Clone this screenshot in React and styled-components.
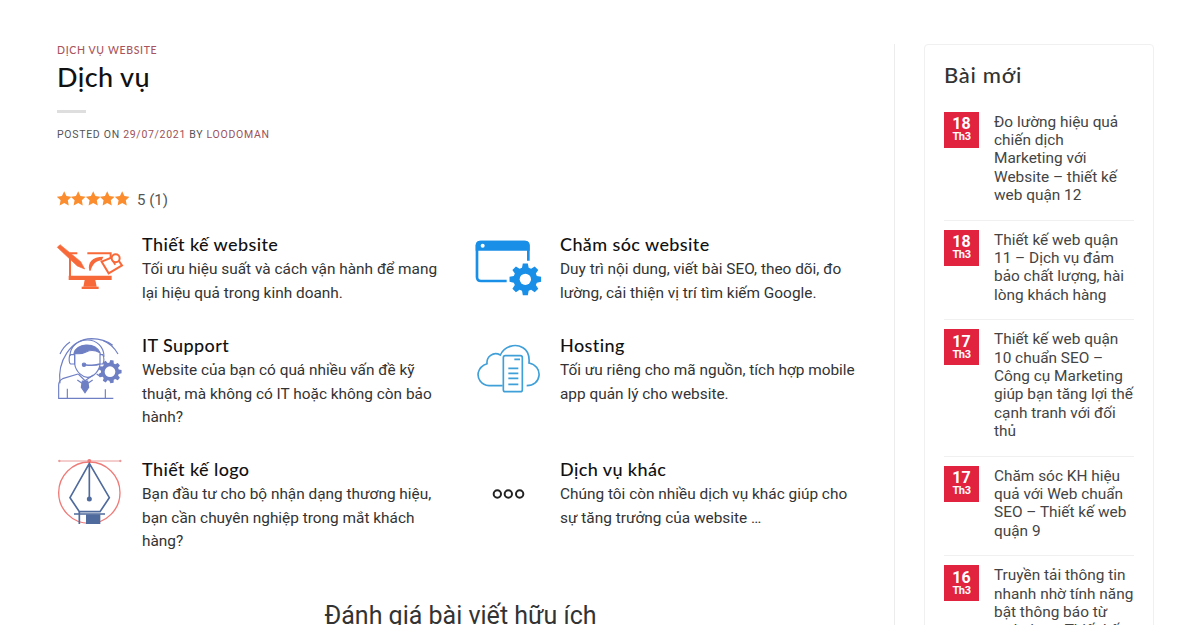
import React from 'react';
import styled, { createGlobalStyle } from 'styled-components';

const GlobalStyle = createGlobalStyle`
  html, body {
    margin: 0;
    height: 625px;
    overflow: hidden;
    background: #fff;
    font-family: Roboto, "Liberation Sans", sans-serif;
  }
`;

const heading = 'Lato, "Noto Sans", sans-serif';

const Page = styled.div`
  display: flex;
  width: 1200px;
  height: 625px;
  overflow: hidden;
  padding: 44px 47px 0 57px;
  box-sizing: border-box;
`;

const Main = styled.main`
  width: 838px;
  flex: none;
  padding-right: 30px;
  box-sizing: border-box;
  border-right: 1px solid #ececec;
  height: 700px;
`;

const Category = styled.div`
  font-family: ${heading};
  font-size: 10.5px;
  line-height: 12px;
  letter-spacing: 0.65px;
  font-weight: 500;
  color: #a9545c;
`;

const Title = styled.h1`
  margin: 5px 0 0;
  font-family: ${heading};
  font-size: 27px;
  line-height: 32px;
  letter-spacing: 0.4px;
  font-weight: 500;
  color: #111;
`;

const Rule = styled.div`
  width: 29px;
  height: 3px;
  margin-top: 17px;
  background: #dedede;
`;

const Meta = styled.div`
  margin-top: 15px;
  font-size: 10.5px;
  line-height: 13px;
  letter-spacing: 0.7px;
  text-transform: uppercase;
  color: #555;
`;

const MetaLink = styled.span`
  color: #9c5158;
`;

const Rating = styled.div`
  display: flex;
  align-items: center;
  gap: 8px;
  margin-top: 49px;
  font-size: 15px;
  line-height: 20px;
  color: #555;
`;

const Stars = styled.div`
  display: flex;
  width: 72px;
  margin-top: -3px;
`;

const Services = styled.div`
  display: grid;
  grid-template-columns: 418px 400px;
  margin-top: 24px;
`;

const Service = styled.div`
  display: flex;
  min-height: ${(p) => p.$height}px;
`;

const IconCell = styled.div`
  width: 85px;
  flex: none;
  padding-top: 4px;
`;

const IconSvg = styled.svg`
  display: block;
  width: 85px;
  height: 80px;
  overflow: visible;
`;

const ServiceTitle = styled.h3`
  margin: -1px 0 0;
  font-family: ${heading};
  font-size: 18px;
  line-height: 22px;
  letter-spacing: 0.4px;
  font-weight: 500;
  color: #111;
`;

const ServiceText = styled.p`
  margin: 3px 0 0;
  width: 303px;
  font-size: 15.4px;
  line-height: 23.5px;
  color: #333;
`;

const Review = styled.h2`
  margin: 40px 0 0;
  text-align: center;
  font-size: 25px;
  line-height: 32px;
  font-weight: 400;
  color: #333;
`;

const Side = styled.aside`
  margin-left: 29px;
  width: 230px;
  height: 700px;
  flex: none;
  box-sizing: border-box;
  padding: 17px 19px 0 19px;
  border: 1px solid #f0f0f0;
  border-radius: 4px;
`;

const SideTitle = styled.h3`
  margin: 0 0 14.5px;
  font-family: ${heading};
  font-size: 22px;
  line-height: 26px;
  letter-spacing: 0.7px;
  font-weight: 500;
  color: #333;
`;

const Post = styled.div`
  display: flex;
  gap: 15px;
  padding: 10px 0 15px;
  border-bottom: 1px solid #f0f0f0;
`;

const DateBadge = styled.div`
  width: 35px;
  height: 36px;
  flex: none;
  display: flex;
  flex-direction: column;
  align-items: center;
  justify-content: center;
  background: #e2233f;
  color: #fff;
  font-weight: 700;
  margin-top: -1px;
`;

const Day = styled.span`
  font-size: 16px;
  line-height: 14px;
`;

const Month = styled.span`
  font-size: 11px;
  line-height: 11px;
  letter-spacing: -0.4px;
`;

const PostTitle = styled.div`
  font-size: 15.4px;
  line-height: 18.4px;
  color: #444;
`;

const Star = () => (
  <svg width="14.4" height="15" viewBox="1 1 22 22" fill="#fb8d2e">
    <path d="M12 1l3.4 7.3 7.9 1-5.8 5.5 1.5 7.9L12 18.8l-7 3.9 1.5-7.9L.7 9.3l7.9-1z" />
  </svg>
);

// toothed outline for the two gear icons
const gearPath = (cx, cy, outer, inner, teeth) => {
  const pts = [];
  const step = (Math.PI * 2) / teeth;
  for (let i = 0; i < teeth; i++) {
    const a = i * step;
    const at = (r, d) => `${(cx + r * Math.cos(a + d)).toFixed(1)} ${(cy + r * Math.sin(a + d)).toFixed(1)}`;
    pts.push(at(inner, -step * 0.36), at(outer, -step * 0.2), at(outer, step * 0.2), at(inner, step * 0.36));
  }
  return `M${pts.join('L')}Z`;
};

const DesignIcon = () => (
  <IconSvg viewBox="21 24 255 240" fill="none" stroke="#f8693a">
    <path d="M22 52L30 44L92 95L104 117L82 108Z" fill="#f8693a" strokeWidth="2" />
    <path d="M60 70H82M112 70H182V84M60 72V140" strokeWidth="6" />
    <path d="M56 137H185V150H56Z" fill="#f8693a" stroke="none" />
    <path d="M104 150H136L140 170H100Z" fill="#f8693a" stroke="none" />
    <path d="M95 170H146V177H95Z" fill="#f8693a" stroke="none" />
    <path d="M118 122C112 98 126 80 160 80L155 92C142 90 128 100 122 122Z" fill="#f8693a" stroke="none" />
    <path d="M155 95L196 78L216 106L176 130Z" fill="#fff" strokeWidth="6" />
    <circle cx="197" cy="85" r="12" fill="#fff" strokeWidth="6" />
    <path d="M188 92L196 104" strokeWidth="5" />
  </IconSvg>
);

const SupportIcon = () => (
  <IconSvg viewBox="21 27 255 240" fill="none" stroke="#6f7fc4" strokeWidth="3.5">
    <path d="M30 160C22 95 60 28 125 26C150 26 170 32 188 46" />
    <path d="M30 72C38 55 48 44 60 36M160 32C180 40 195 55 204 72" />
    <path d="M60 78C60 48 85 30 112 30C140 30 162 50 162 80" />
    <path d="M72 70C78 40 135 35 150 68C135 60 120 60 108 66C96 72 82 72 72 70Z" fill="#6f7fc4" />
    <path d="M74 70V102C78 128 100 142 112 142C130 142 150 122 150 100V70" />
    <path d="M62 74H74V102H62C56 100 56 76 62 74ZM150 74H158C163 80 163 98 158 102H150" />
    <path d="M150 102C140 106 118 106 102 104" strokeWidth="4.5" />
    <circle cx="102" cy="104" r="5" fill="#6f7fc4" />
    <path d="M84 132L38 146C30 150 26 156 26 165V205H190" />
    <path d="M140 132L152 140" />
    <path d="M85 132L105 152L130 135M82 150L96 160M128 150L114 160" />
    <path d="M97 153H113L116 172L105 188L94 172Z" fill="#6f7fc4" />
    <path d="M52 176V205M166 178V205" />
    <path d={gearPath(180, 125, 35, 27, 9)} fill="#6f7fc4" stroke="none" />
    <circle cx="180" cy="125" r="16" fill="#fff" stroke="none" />
  </IconSvg>
);

const PenIcon = () => (
  <IconSvg viewBox="21 24 255 240" fill="none">
    <circle cx="118" cy="113" r="92" stroke="#ee7b78" strokeWidth="4" />
    <path d="M26 18H212" stroke="#e99a9a" strokeWidth="3" />
    <circle cx="118" cy="18" r="6" fill="#ee7b78" />
    <circle cx="28" cy="18" r="3.5" fill="#e99a9a" />
    <circle cx="211" cy="18" r="3.5" fill="#e99a9a" />
    <path d="M118 25L60 128L88 170H150L178 128ZM118 25V130" stroke="#4f6a9c" strokeWidth="5" />
    <circle cx="118" cy="132" r="7.5" fill="#4f6a9c" />
    <path d="M72 177H165M88 170V207" stroke="#4f6a9c" strokeWidth="5" />
    <path d="M108 178H151V207H108Z" fill="#4f6a9c" />
  </IconSvg>
);

const CareIcon = () => (
  <IconSvg viewBox="30 24 255 240" fill="none">
    <path d="M125 153H48C40 153 36 149 36 141V48C36 40 40 36 48 36H178C186 36 190 40 190 48V92" stroke="#1a8fe8" strokeWidth="8" />
    <path d="M32 62V46C32 37 37 32 46 32H180C189 32 194 37 194 46V62Z" fill="#1a8fe8" />
    <circle cx="53" cy="47" r="6" fill="#fff" />
    <path d={gearPath(181, 148, 48, 36, 8)} fill="#1a8fe8" />
    <circle cx="181" cy="148" r="17" fill="#fff" />
  </IconSvg>
);

const CloudIcon = () => (
  <IconSvg viewBox="30 12 255 240" fill="none" stroke="#3f9fd8" strokeWidth="5">
    <path d="M113 152H72C48 150 36 130 40 112C44 96 54 90 66 86C64 66 84 48 106 60C118 34 150 24 174 38C188 46 194 62 192 84C212 88 224 104 222 122C220 140 206 152 185 152" />
    <rect x="115" y="62" width="57" height="108" rx="6" fill="#fff" />
    <path d="M130 100H160M130 115H160M130 130H160M130 148H160M148 73H165" />
  </IconSvg>
);

const DotsIcon = () => (
  <IconSvg viewBox="-15 -21 255 240" fill="none" stroke="#222" strokeWidth="6">
    <circle cx="52" cy="72" r="11" />
    <circle cx="85" cy="72" r="11" />
    <circle cx="119" cy="72" r="11" />
  </IconSvg>
);

const services = [
  { title: 'Thiết kế website', text: 'Tối ưu hiệu suất và cách vận hành để mang lại hiệu quả trong kinh doanh.', icon: <DesignIcon />, height: 101 },
  { title: 'Chăm sóc website', text: 'Duy trì nội dung, viết bài SEO, theo dõi, đo lường, cải thiện vị trí tìm kiếm Google.', icon: <CareIcon />, height: 101 },
  { title: 'IT Support', text: 'Website của bạn có quá nhiều vấn đề kỹ thuật, mà không có IT hoặc không còn bảo hành?', icon: <SupportIcon />, height: 124 },
  { title: 'Hosting', text: 'Tối ưu riêng cho mã nguồn, tích hợp mobile app quản lý cho website.', icon: <CloudIcon />, height: 124 },
  { title: 'Thiết kế logo', text: 'Bạn đầu tư cho bộ nhận dạng thương hiệu, bạn cần chuyên nghiệp trong mắt khách hàng?', icon: <PenIcon />, height: 101 },
  { title: 'Dịch vụ khác', text: 'Chúng tôi còn nhiều dịch vụ khác giúp cho sự tăng trưởng của website …', icon: <DotsIcon />, height: 101 },
];

const posts = [
  { day: 18, title: 'Đo lường hiệu quả chiến dịch Marketing với Website – thiết kế web quận 12' },
  { day: 18, title: 'Thiết kế web quận 11 – Dịch vụ đảm bảo chất lượng, hài lòng khách hàng' },
  { day: 17, title: 'Thiết kế web quận 10 chuẩn SEO – Công cụ Marketing giúp bạn tăng lợi thế cạnh tranh với đối thủ' },
  { day: 17, title: 'Chăm sóc KH hiệu quả với Web chuẩn SEO – Thiết kế web quận 9' },
  { day: 16, title: 'Truyền tải thông tin nhanh nhờ tính năng bật thông báo từ website – Thiết kế web' },
];

export default function App() {
  return (
    <Page>
      <GlobalStyle />
      <Main>
        <Category>DỊCH VỤ WEBSITE</Category>
        <Title>Dịch vụ</Title>
        <Rule />
        <Meta>
          Posted on <MetaLink>29/07/2021</MetaLink> by <MetaLink>loodoman</MetaLink>
        </Meta>
        <Rating>
          <Stars>
            {[0, 1, 2, 3, 4].map((i) => <Star key={i} />)}
          </Stars>
          <span>5 (1)</span>
        </Rating>
        <Services>
          {services.map((s) => (
            <Service key={s.title} $height={s.height}>
              <IconCell>{s.icon}</IconCell>
              <div>
                <ServiceTitle>{s.title}</ServiceTitle>
                <ServiceText>{s.text}</ServiceText>
              </div>
            </Service>
          ))}
        </Services>
        <Review>Đánh giá bài viết hữu ích</Review>
      </Main>
      <Side>
        <SideTitle>Bài mới</SideTitle>
        {posts.map((p, i) => (
          <Post key={i}>
            <DateBadge>
              <Day>{p.day}</Day>
              <Month>Th3</Month>
            </DateBadge>
            <PostTitle>{p.title}</PostTitle>
          </Post>
        ))}
      </Side>
    </Page>
  );
}
